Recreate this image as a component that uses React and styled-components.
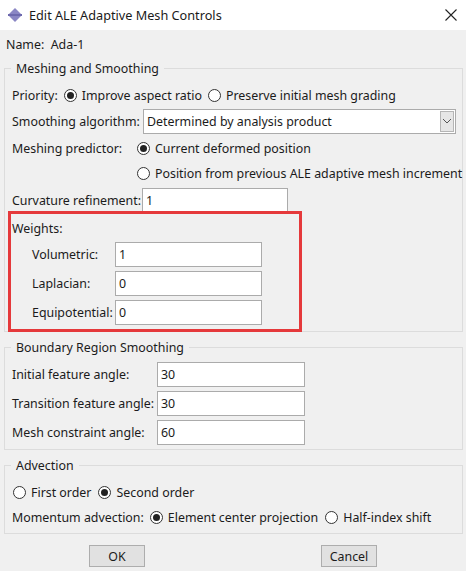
import React from "react";
import styled, { createGlobalStyle } from "styled-components";

const Global = createGlobalStyle`
  html, body { margin: 0; padding: 0; }
  body {
    font-family: "Noto Sans", "Open Sans", Arial, sans-serif;
    font-size: 12.4px;
    color: #1b1b1b;
    background: #f0f0f0;
  }
  *, *::before, *::after { box-sizing: border-box; }
`;

const Window = styled.div`
  width: 466px;
  height: 571px;
  background: #f0f0f0;
  display: flex;
  flex-direction: column;
`;

const TitleBar = styled.div`
  height: 30px;
  background: #ffffff;
  display: flex;
  align-items: center;
  padding: 0 8px 0 7px;
  gap: 6px;
  font-size: 12.7px;
  color: #1a1a1a;
`;

const TitleText = styled.span`
  flex: 1;
`;

const Body = styled.div`
  display: flex;
  flex-direction: column;
  padding: 2px 3px 0 4px;
`;

const Row = styled.div`
  display: flex;
  align-items: center;
  height: ${(p) => p.$h || 26}px;
  padding-left: ${(p) => p.$indent || 0}px;
`;

const NameRow = styled(Row)`
  padding-left: 2px;
  margin-bottom: 12px;
`;

const Group = styled.div`
  position: relative;
  border: 1px solid #dcdcdc;
  padding: ${(p) => p.$pt || 13}px 6px ${(p) => p.$pb || 3}px 7px;
  margin-bottom: ${(p) => p.$mb || 0}px;
`;

const Legend = styled.span`
  position: absolute;
  top: -9px;
  left: 6px;
  padding: 0 5px;
  background: #f0f0f0;
  line-height: 17px;
`;

const Label = styled.span`
  width: ${(p) => (p.$w ? `${p.$w}px` : "auto")};
  flex: none;
  margin-right: ${(p) => p.$mr || 0}px;
  white-space: nowrap;
`;

const Input = styled.div`
  width: ${(p) => p.$w || 147}px;
  height: ${(p) => p.$h || 25}px;
  background: #fff;
  border: 1px solid #ababab;
  display: flex;
  align-items: center;
  padding-left: 3px;
  flex: none;
  color: #1b1b1b;
`;

const RadioWrap = styled.label`
  display: inline-flex;
  align-items: center;
  gap: 5px;
  margin-right: ${(p) => p.$mr || 6}px;
  white-space: nowrap;
`;

const Circle = styled.span`
  width: 13px;
  height: 13px;
  border-radius: 50%;
  border: 1px solid #333;
  background: #fff;
  display: inline-flex;
  align-items: center;
  justify-content: center;
  flex: none;
  &::after {
    content: "";
    width: 7px;
    height: 7px;
    border-radius: 50%;
    background: ${(p) => (p.$on ? "#222" : "transparent")};
  }
`;

const Radio = ({ on, children, mr }) => (
  <RadioWrap $mr={mr}>
    <Circle $on={on} />
    <span>{children}</span>
  </RadioWrap>
);

const Select = styled.div`
  width: 313px;
  height: 25px;
  background: #fff;
  border: 1px solid #ababab;
  display: flex;
  align-items: center;
  padding: 1px 1px 1px 3px;
`;

const SelectText = styled.span`
  flex: 1;
`;

const Arrow = styled.span`
  width: 14px;
  height: 21px;
  background: #e6e6e6;
  border: 1px solid #b5b5b5;
  display: flex;
  align-items: center;
  justify-content: center;
`;

const Highlight = styled.div`
  position: relative;
  &::after {
    content: "";
    position: absolute;
    left: -4px;
    top: -5px;
    width: 294px;
    bottom: -5px;
    border: 3px solid #e5393b;
    pointer-events: none;
  }
`;

const Buttons = styled.div`
  display: flex;
  padding-left: 85px;
  gap: 176px;
  margin-top: 11px;
`;

const Button = styled.div`
  width: 56px;
  height: 22px;
  background: #e1e1e1;
  border: 1px solid #adadad;
  display: flex;
  align-items: center;
  justify-content: center;
`;

const AppIcon = () => (
  <svg width="16" height="16" viewBox="0 0 16 16">
    <path d="M8 1 L14 7 L2 7 Z" fill="#8a86c4" />
    <path d="M8 15 L14 9 L2 9 Z" fill="#8a86c4" />
    <rect x="1" y="7" width="14" height="2" fill="#6e6aae" />
  </svg>
);

const CloseIcon = () => (
  <svg width="14" height="14" viewBox="0 0 14 14">
    <path d="M1.5 1.5 L12.5 12.5 M12.5 1.5 L1.5 12.5" stroke="#222" strokeWidth="1.1" />
  </svg>
);

const Chevron = () => (
  <svg width="10" height="6" viewBox="0 0 10 6">
    <path d="M1 1 L5 5 L9 1" stroke="#555" strokeWidth="1" fill="none" />
  </svg>
);

export default function App() {
  return (
    <Window>
      <Global />
      <TitleBar>
        <AppIcon />
        <TitleText>Edit ALE Adaptive Mesh Controls</TitleText>
        <CloseIcon />
      </TitleBar>
      <Body>
        <NameRow $h={24}>Name:&nbsp; Ada-1</NameRow>

        <Group $pt={13} $pb={4} $mb={15}>
          <Legend>Meshing and Smoothing</Legend>
          <Row $h={26}>
            <Label $mr={6}>Priority:</Label>
            <Radio on mr={6}>Improve aspect ratio</Radio>
            <Radio>Preserve initial mesh grading</Radio>
          </Row>
          <Row $h={26}>
            <Label $w={131}>Smoothing algorithm:</Label>
            <Select>
              <SelectText>Determined by analysis product</SelectText>
              <Arrow>
                <Chevron />
              </Arrow>
            </Select>
          </Row>
          <Row $h={28}>
            <Label $w={125}>Meshing predictor:</Label>
            <Radio on>Current deformed position</Radio>
          </Row>
          <Row $h={22} $indent={125}>
            <Radio>Position from previous ALE adaptive mesh increment</Radio>
          </Row>
          <Row $h={32}>
            <Label $w={130}>Curvature refinement:</Label>
            <Input $w={146} $h={24}>1</Input>
          </Row>
          <Highlight>
            <Row $h={24}>Weights:</Row>
            <Row $h={29} $indent={20}>
              <Label $w={83}>Volumetric:</Label>
              <Input>1</Input>
            </Row>
            <Row $h={29} $indent={20}>
              <Label $w={83}>Laplacian:</Label>
              <Input>0</Input>
            </Row>
            <Row $h={29} $indent={20}>
              <Label $w={83}>Equipotential:</Label>
              <Input>0</Input>
            </Row>
          </Highlight>
        </Group>

        <Group $pt={12} $pb={2} $mb={15}>
          <Legend>Boundary Region Smoothing</Legend>
          <Row $h={29}>
            <Label $w={145}>Initial feature angle:</Label>
            <Input $w={148}>30</Input>
          </Row>
          <Row $h={29}>
            <Label $w={145}>Transition feature angle:</Label>
            <Input $w={148}>30</Input>
          </Row>
          <Row $h={29}>
            <Label $w={145}>Mesh constraint angle:</Label>
            <Input $w={148}>60</Input>
          </Row>
        </Group>

        <Group $pt={14} $pb={3}>
          <Legend>Advection</Legend>
          <Row $h={24} $indent={1}>
            <Radio mr={7}>First order</Radio>
            <Radio on>Second order</Radio>
          </Row>
          <Row $h={26}>
            <Label $mr={6}>Momentum advection:</Label>
            <Radio on mr={7}>Element center projection</Radio>
            <Radio>Half-index shift</Radio>
          </Row>
        </Group>

        <Buttons>
          <Button>OK</Button>
          <Button>Cancel</Button>
        </Buttons>
      </Body>
    </Window>
  );
}
